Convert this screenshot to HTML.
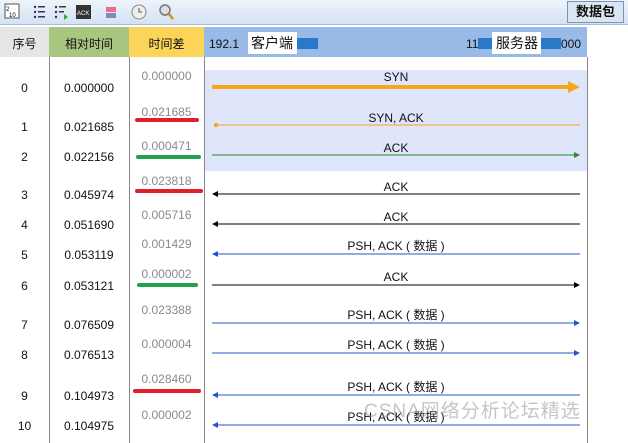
<!DOCTYPE html>
<html><head><meta charset="utf-8"><style>
body{margin:0;width:628px;height:443px;overflow:hidden;background:#fff;position:relative;font-family:"Liberation Sans","Noto Sans CJK SC",sans-serif;font-size:12px;color:#111}
.a{position:absolute;line-height:16px;height:16px;white-space:nowrap}
.c{text-align:center}
.g{color:#8a8a8a}
</style></head><body>
<div style="position:absolute;left:0;top:0;width:628px;height:24px;background:linear-gradient(#eef4fb,#d4e2f3);border-bottom:1px solid #a9bcd6"></div>
<svg style="position:absolute;left:0;top:0" width="200" height="24">
<rect x="5" y="4" width="14" height="14" fill="#fff" stroke="#555"/><text x="6" y="11" font-size="6">2</text><text x="9" y="17" font-size="6">10</text>
<g fill="#335"><circle cx="35" cy="7" r="1.2"/><circle cx="35" cy="12" r="1.2"/><circle cx="35" cy="17" r="1.2"/><rect x="38" y="6" width="7" height="1.5"/><rect x="38" y="11" width="7" height="1.5"/><rect x="38" y="16" width="7" height="1.5"/>
<circle cx="56" cy="7" r="1.2"/><circle cx="56" cy="12" r="1.2"/><circle cx="56" cy="17" r="1.2"/><rect x="59" y="6" width="7" height="1.5"/><rect x="59" y="11" width="5" height="1.5"/></g>
<path d="M64 14l4 3-4 3z" fill="#3a3"/>
<rect x="76" y="5" width="15" height="14" fill="#333"/><text x="77" y="15" font-size="6" fill="#fff">ACK</text>
<rect x="106" y="7" width="10" height="5" fill="#e8708a"/><rect x="106" y="13" width="10" height="5" fill="#88a"/>
<circle cx="139" cy="12" r="7" fill="#eee" stroke="#888"/><path d="M139 8v4h3" stroke="#555" fill="none"/>
<circle cx="165" cy="10" r="5" fill="#dde" stroke="#777" stroke-width="1.5"/><path d="M169 14l4 5" stroke="#c90" stroke-width="2.5"/>
</svg>
<div class="a" style="left:567px;top:1px;width:55px;height:20px;line-height:20px;background:#dce6f2;border:1px solid #7d93b3;font-weight:bold;font-size:13px;text-align:center">数据包</div>
<div style="position:absolute;left:0;top:27px;width:49px;height:30px;background:#e6e6e6"></div>
<div style="position:absolute;left:49px;top:27px;width:80px;height:30px;background:#a9c680"></div>
<div style="position:absolute;left:129px;top:27px;width:75px;height:30px;background:#fcd45a"></div>
<div style="position:absolute;left:204px;top:27px;width:383px;height:30px;background:#99b9e6"></div>
<div class="a c" style="left:0;top:36px;width:49px">序号</div>
<div class="a c" style="left:49px;top:36px;width:80px">相对时间</div>
<div class="a c" style="left:129px;top:36px;width:75px">时间差</div>
<div class="a" style="left:209px;top:36px">192.1</div>
<div style="position:absolute;left:248px;top:32px;width:49px;height:22px;background:#fff"></div>
<div class="a" style="left:251px;top:35px;font-size:14px">客户端</div>
<div style="position:absolute;left:297px;top:38px;width:21px;height:11px;background:#2a78c8"></div>
<div class="a" style="left:466px;top:36px">11</div>
<div style="position:absolute;left:478px;top:38px;width:14px;height:11px;background:#2a78c8"></div>
<div style="position:absolute;left:492px;top:32px;width:49px;height:22px;background:#fff"></div>
<div class="a" style="left:496px;top:35px;font-size:14px">服务器</div>
<div style="position:absolute;left:541px;top:38px;width:20px;height:11px;background:#2a78c8"></div>
<div class="a" style="left:561px;top:36px">000</div>
<div style="position:absolute;left:49px;top:57px;width:1px;height:386px;background:#888"></div>
<div style="position:absolute;left:129px;top:57px;width:1px;height:386px;background:#888"></div>
<div style="position:absolute;left:204px;top:57px;width:1px;height:386px;background:#888"></div>
<div style="position:absolute;left:587px;top:57px;width:1px;height:386px;background:#888"></div>
<div style="position:absolute;left:205px;top:70px;width:382px;height:101px;background:#dfe5fa"></div>
<svg style="position:absolute;left:0;top:0" width="628" height="443">
<line x1="212" y1="87" x2="571" y2="87" stroke="#f9a51a" stroke-width="4"/><path d="M568 81L580 87L568 93z" fill="#f9a51a"/>
<line x1="216" y1="125" x2="580" y2="125" stroke="#f9a51a"/><circle cx="216" cy="125" r="2.2" fill="#f9a51a"/>
<line x1="212" y1="155" x2="576" y2="155" stroke="#2b8a2b"/><path d="M574 152L580 155L574 158z" fill="#2b8a2b"/>
<line x1="216" y1="194" x2="580" y2="194" stroke="#000"/><path d="M218 191L212 194L218 197z" fill="#000"/>
<line x1="216" y1="224" x2="580" y2="224" stroke="#000"/><path d="M218 221L212 224L218 227z" fill="#000"/>
<line x1="216" y1="254" x2="580" y2="254" stroke="#2255cc"/><path d="M218 251L212 254L218 257z" fill="#2255cc"/>
<line x1="212" y1="285" x2="576" y2="285" stroke="#000"/><path d="M574 282L580 285L574 288z" fill="#000"/>
<line x1="212" y1="323" x2="576" y2="323" stroke="#2255cc"/><path d="M574 320L580 323L574 326z" fill="#2255cc"/>
<line x1="212" y1="353" x2="576" y2="353" stroke="#2255cc"/><path d="M574 350L580 353L574 356z" fill="#2255cc"/>
<line x1="216" y1="395" x2="580" y2="395" stroke="#2255cc"/><path d="M218 392L212 395L218 398z" fill="#2255cc"/>
<line x1="216" y1="425" x2="580" y2="425" stroke="#2255cc"/><path d="M218 422L212 425L218 428z" fill="#2255cc"/>
<g stroke-linecap="round" stroke-width="4">
<line x1="137" y1="120" x2="197" y2="120" stroke="#e01e2c"/>
<line x1="138" y1="157" x2="199" y2="157" stroke="#22a24a"/>
<line x1="137" y1="191" x2="201" y2="191" stroke="#e01e2c"/>
<line x1="139" y1="285" x2="196" y2="285" stroke="#22a24a"/>
<line x1="135" y1="391" x2="199" y2="391" stroke="#e01e2c"/>
</g>
</svg>
<div class="a c" style="left:0;width:49px;top:80px">0</div><div class="a c" style="left:49px;width:80px;top:80px">0.000000</div><div class="a c g" style="left:129px;width:75px;top:68px">0.000000</div>
<div class="a c" style="left:0;width:49px;top:119px">1</div><div class="a c" style="left:49px;width:80px;top:119px">0.021685</div><div class="a c g" style="left:129px;width:75px;top:104px">0.021685</div>
<div class="a c" style="left:0;width:49px;top:149px">2</div><div class="a c" style="left:49px;width:80px;top:149px">0.022156</div><div class="a c g" style="left:129px;width:75px;top:138px">0.000471</div>
<div class="a c" style="left:0;width:49px;top:187px">3</div><div class="a c" style="left:49px;width:80px;top:187px">0.045974</div><div class="a c g" style="left:129px;width:75px;top:173px">0.023818</div>
<div class="a c" style="left:0;width:49px;top:217px">4</div><div class="a c" style="left:49px;width:80px;top:217px">0.051690</div><div class="a c g" style="left:129px;width:75px;top:207px">0.005716</div>
<div class="a c" style="left:0;width:49px;top:247px">5</div><div class="a c" style="left:49px;width:80px;top:247px">0.053119</div><div class="a c g" style="left:129px;width:75px;top:236px">0.001429</div>
<div class="a c" style="left:0;width:49px;top:278px">6</div><div class="a c" style="left:49px;width:80px;top:278px">0.053121</div><div class="a c g" style="left:129px;width:75px;top:266px">0.000002</div>
<div class="a c" style="left:0;width:49px;top:317px">7</div><div class="a c" style="left:49px;width:80px;top:317px">0.076509</div><div class="a c g" style="left:129px;width:75px;top:302px">0.023388</div>
<div class="a c" style="left:0;width:49px;top:347px">8</div><div class="a c" style="left:49px;width:80px;top:347px">0.076513</div><div class="a c g" style="left:129px;width:75px;top:336px">0.000004</div>
<div class="a c" style="left:0;width:49px;top:388px">9</div><div class="a c" style="left:49px;width:80px;top:388px">0.104973</div><div class="a c g" style="left:129px;width:75px;top:371px">0.028460</div>
<div class="a c" style="left:0;width:49px;top:418px">10</div><div class="a c" style="left:49px;width:80px;top:418px">0.104975</div><div class="a c g" style="left:129px;width:75px;top:407px">0.000002</div>
<div class="a c" style="left:296px;width:200px;top:69px">SYN</div>
<div class="a c" style="left:296px;width:200px;top:110px">SYN, ACK</div>
<div class="a c" style="left:296px;width:200px;top:140px">ACK</div>
<div class="a c" style="left:296px;width:200px;top:179px">ACK</div>
<div class="a c" style="left:296px;width:200px;top:209px">ACK</div>
<div class="a c" style="left:296px;width:200px;top:238px">PSH, ACK ( 数据 )</div>
<div class="a c" style="left:296px;width:200px;top:269px">ACK</div>
<div class="a c" style="left:296px;width:200px;top:307px">PSH, ACK ( 数据 )</div>
<div class="a c" style="left:296px;width:200px;top:337px">PSH, ACK ( 数据 )</div>
<div class="a c" style="left:296px;width:200px;top:379px">PSH, ACK ( 数据 )</div>
<div class="a c" style="left:296px;width:200px;top:409px">PSH, ACK ( 数据 )</div>
<div class="a" style="left:364px;top:400px;height:24px;line-height:24px;font-size:19px;letter-spacing:1px;color:rgba(150,150,150,0.55)">CSNA网络分析论坛精选</div>
</body></html>
